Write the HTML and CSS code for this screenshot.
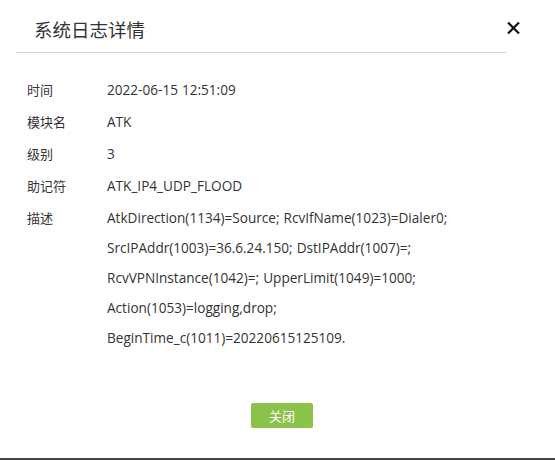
FILE: index.html
```html
<!DOCTYPE html>
<html lang="zh-CN">
<head>
<meta charset="utf-8">
<title>系统日志详情</title>
<link rel="stylesheet" href="styles.css">
</head>
<body>
<div class="dialog">
  <div class="header">
    <h1 class="title">系统日志详情</h1>
    <span class="close" aria-label="关闭">
      <svg width="13" height="12" viewBox="0 0 13 12"><path d="M1 0.5 L12 11.5 M12 0.5 L1 11.5" stroke="#111" stroke-width="2.2" fill="none"/></svg>
    </span>
  </div>
  <div class="divider"></div>
  <div class="content">
    <div class="row"><div class="label">时间</div><div class="value">2022-06-15 12:51:09</div></div>
    <div class="row"><div class="label">模块名</div><div class="value">ATK</div></div>
    <div class="row"><div class="label">级别</div><div class="value">3</div></div>
    <div class="row"><div class="label">助记符</div><div class="value">ATK_IP4_UDP_FLOOD</div></div>
    <div class="row"><div class="label">描述</div><div class="value desc">AtkDirection(1134)=Source; RcvIfName(1023)=Dialer0; SrcIPAddr(1003)=36.6.24.150; DstIPAddr(1007)=; RcvVPNInstance(1042)=; UpperLimit(1049)=1000; Action(1053)=logging,drop; BeginTime_c(1011)=20220615125109.</div></div>
  </div>
  <div class="footer">
    <button class="btn">关闭</button>
  </div>
</div>
<div class="strip"></div>
</body>
</html>
```
FILE: styles.css
```css
html, body {
  margin: 0;
  padding: 0;
  background: #ffffff;
}
body {
  font-family: "Open Sans", "Noto Sans CJK SC", sans-serif;
  color: #333333;
  font-size: 13.6px;
  width: 555px;
  height: 460px;
  overflow: hidden;
}
.dialog {
  height: 458px;
  display: flex;
  flex-direction: column;
}
.header {
  height: 52px;
  display: flex;
  align-items: center;
  justify-content: space-between;
  padding: 0 35px 0 34px;
  box-sizing: border-box;
}
.title {
  margin: 0;
  font-family: "Noto Sans CJK SC", sans-serif;
  font-weight: normal;
  font-size: 18.5px;
  color: #333333;
  padding-top: 6px;
}
.close {
  display: flex;
  padding-top: 3px;
}
.divider {
  height: 1px;
  background: #d3d3d3;
  margin: 0 49px 0 16px;
}
.content {
  padding: 22px 0 0 27px;
}
.row {
  display: flex;
  line-height: 30px;
  margin-bottom: 2px;
}
.label {
  width: 80px;
  flex: none;
  font-family: "Noto Sans CJK SC", sans-serif;
  font-size: 13px;
}
.value {
  flex: none;
  word-spacing: 0.5px;
}
.desc {
  width: 380px;
}
.footer {
  display: flex;
  justify-content: center;
  padding-left: 9px;
  margin-top: 48px;
}
.btn {
  width: 62px;
  height: 25px;
  border: none;
  border-radius: 2px;
  background: #8bc34a;
  color: #ffffff;
  font-family: "Noto Sans CJK SC", sans-serif;
  font-size: 13px;
  padding: 0;
  cursor: pointer;
}
.strip {
  height: 2px;
  background: #474747;
}
```
